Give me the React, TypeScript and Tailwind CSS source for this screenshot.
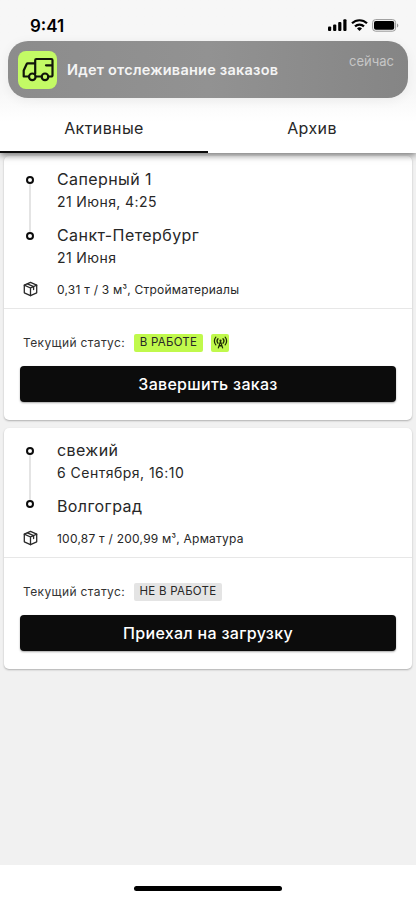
import React from "react";

function Dot() {
  return <span className="h-2 w-2 rounded-full border-2 border-[#0c0c0c] bg-white" />;
}

function Track({ className }: { className: string }) {
  return (
    <div className={"flex w-2 shrink-0 flex-col items-center " + className}>
      <Dot />
      <span className="w-[2px] grow bg-[#e4e4e4]" />
      <Dot />
    </div>
  );
}

function BoxIcon() {
  return (
    <svg width="15" height="16" viewBox="0 0 15 16" fill="none" stroke="#2a2a2a" strokeWidth="1.3" strokeLinejoin="round" strokeLinecap="round">
      <path d="M7.500 1.300 13.700 4.200v7.600L7.500 14.700 1.300 11.800V4.200Z" />
      <path d="M1.300 4.200 7.500 7l6.200-2.800M7.500 7v7.700M4.400 2.800l6.200 2.800v3" />
    </svg>
  );
}

function TowerIcon() {
  return (
    <svg width="15" height="13" viewBox="0 0 16 14" fill="none" stroke="#1d2b05" strokeWidth="1.350" strokeLinecap="round">
      <path d="M3 1.200C.9 3.400.9 7.300 3 9.500M13 1.200c2.100 2.200 2.100 6.100 0 8.300M5.300 3c-1.200 1.300-1.200 3.500 0 4.800M10.700 3c1.200 1.300 1.200 3.500 0 4.800M8 5.800 5.700 12.800M8 5.800l2.300 7M6.700 10.500h2.600" />
      <circle cx="8" cy="4.900" r="1.200" fill="#1d2b05" stroke="none" />
    </svg>
  );
}

function TruckIcon() {
  return (
    <svg width="32" height="26" viewBox="0 0 32 26" fill="none" stroke="#10150a" strokeWidth="2.200" strokeLinejoin="round" strokeLinecap="round">
      <path d="M7 19.500H1.700V13.500L4.700 7Q5 6.400 5.700 6.400H13.200M13.200 16.800V3.200A1.200 1.200 0 0 1 14.400 2h14.900a1.200 1.200 0 0 1 1.200 1.200v15.100a1.200 1.200 0 0 1-1.200 1.200H26.500M13.700 19.500h6M30.500 8.300h-6.500" />
      <circle cx="10.300" cy="19.800" r="3.300" />
      <circle cx="23" cy="19.800" r="3.300" />
    </svg>
  );
}

function StatusBar() {
  return (
    <div className="flex h-[41px] items-start justify-between pl-[30px] pr-[17px]">
      <div className="mt-[16px] text-[17px] leading-[20px] font-semibold text-black">9:41</div>
      <div className="mt-[18px] flex h-[14px] items-center">
        <svg width="19" height="12" viewBox="0 0 19 12">
          <rect x="0" y="7.500" width="3.200" height="4.500" rx="1" />
          <rect x="5.100" y="5.500" width="3.200" height="6.500" rx="1" />
          <rect x="10.200" y="3" width="3.200" height="9" rx="1" />
          <rect x="15.300" y="0.200" width="3.200" height="11.800" rx="1" />
        </svg>
        <svg className="ml-1" width="17" height="12" viewBox="0 0 17 12">
          <path fill="none" stroke="#000" strokeWidth="2.200" d="M1 4.300a10.800 10.800 0 0 1 15 0M4 7.400a6.500 6.500 0 0 1 9 0" />
          <path d="M8.500 12 6 9.500a3.600 3.600 0 0 1 5 0Z" />
        </svg>
        <svg className="ml-[4px]" width="27" height="13" viewBox="0 0 27 13">
          <rect x=".6" y=".6" width="23" height="11.600" rx="3" fill="none" stroke="#999" />
          <rect x="2" y="2" width="20.200" height="8.800" rx="1.800" />
          <path d="M25 4.500c1.800.6 1.800 3.400 0 4Z" fill="#999" />
        </svg>
      </div>
    </div>
  );
}

function Cargo({ volume, kind }: { volume: string; kind: string }) {
  return (
    <div className="flex h-5 items-center pl-[19px]">
      <BoxIcon />
      <span className="mt-px ml-[19px] text-[12px] leading-5 tracking-[0.230px] whitespace-nowrap">
        {volume}<span className="align-[1px] text-[10px] leading-none">³</span>, {kind}
      </span>
    </div>
  );
}

function ActionButton({ children }: { children: React.ReactNode }) {
  return (
    <button className="mt-[14px] block h-9 w-full rounded-[4px] bg-[#0c0c0c] text-[16px] leading-9 font-medium tracking-[0.3px] text-white shadow-[0_1px_2px_rgba(0,0,0,0.35)]">
      {children}
    </button>
  );
}

export default function App() {
  return (
    <div className="flex h-[900px] w-[416px] flex-col overflow-hidden bg-[#f1f1f1] text-[#272727] [font-family:Inter,'Liberation_Sans',sans-serif]">
      <header className="relative z-10 flex h-[153px] shrink-0 flex-col bg-linear-to-b from-[#f7f7f7] from-60% to-white to-80% shadow-[0_2px_7px_rgba(0,0,0,0.55)]">
        <StatusBar />
        <div className="mx-2 flex h-[57px] items-center rounded-[20px] bg-linear-to-r from-[#8c8c8c] via-[#929292] to-[#858585] pl-[10px] shadow-[0_2px_12px_rgba(0,0,0,0.06)]">
          <div className="flex h-[38px] w-[39px] items-center justify-center rounded-[8px] bg-[#c3fa65]">
            <TruckIcon />
          </div>
          <div className="ml-[10px] text-[14.500px] leading-5 font-semibold tracking-[0.230px] whitespace-nowrap text-[#f4f4f4]">Идет отслеживание заказов</div>
          <div className="mt-[5px] mr-[14px] ml-auto self-start text-[13px] leading-[30px] text-[#c6c6c6]">сейчас</div>
        </div>
        <nav className="flex grow text-[16px] tracking-[0.4px]">
          <div className="flex w-1/2 items-center justify-center border-b-2 border-[#0c0c0c] pt-[7px]">Активные</div>
          <div className="flex w-1/2 items-center justify-center border-b-2 border-white pt-[7px]">Архив</div>
        </nav>
      </header>

      <main className="flex grow flex-col px-1 pt-[3px]">
        <section className="h-[264px] rounded-[5px] bg-white shadow-[0_1px_2px_rgba(0,0,0,0.28)]">
          <div className="flex h-[123px] pt-[13px]">
            <Track className="mt-[7px] ml-[22px] h-[64px]" />
            <div className="ml-[23px]">
              <div className="h-5 text-[16px] leading-5 tracking-[0.4px]">Саперный 1</div>
              <div className="mt-[3px] h-5 text-[14px] leading-5 tracking-[0.4px]">21 Июня, 4:25</div>
              <div className="mt-[13px] h-5 text-[16px] leading-5 tracking-[0.430px]">Санкт-Петербург</div>
              <div className="mt-[3px] h-5 text-[14px] leading-5 tracking-[0.4px]">21 Июня</div>
            </div>
          </div>
          <Cargo volume="0,31 т / 3 м" kind="Стройматериалы" />
          <div className="mt-[9px] h-px bg-[#e7e7e7]" />
          <div className="px-4 pt-6">
            <div className="flex h-[19px] items-center pl-[3px] text-[12px]">
              <span className="w-[111px] tracking-[0.370px] whitespace-nowrap text-[#333]">Текущий статус:</span>
              <span className="flex h-[18px] w-[69px] items-center justify-center rounded-[2px] bg-[#c0f94c] pt-px text-[11.500px] tracking-[0.250px] whitespace-nowrap">В РАБОТЕ</span>
              <span className="ml-[8px] flex h-[18px] w-[18px] items-center justify-center rounded-[2px] bg-[#c0f94c]"><TowerIcon /></span>
            </div>
            <ActionButton>Завершить заказ</ActionButton>
          </div>
        </section>

        <section className="mt-2 h-[241px] rounded-[5px] bg-white shadow-[0_1px_2px_rgba(0,0,0,0.28)]">
          <div className="flex h-[100px] pt-[12px]">
            <Track className="mt-[7px] ml-[22px] h-[61px]" />
            <div className="ml-[23px]">
              <div className="h-5 text-[16px] leading-5 tracking-[0.4px]">свежий</div>
              <div className="mt-[3px] h-5 text-[14px] leading-5 tracking-[0.480px]">6 Сентября, 16:10</div>
              <div className="mt-[13px] h-5 text-[16px] leading-5 tracking-[0.4px]">Волгоград</div>
            </div>
          </div>
          <Cargo volume="100,87 т / 200,99 м" kind="Арматура" />
          <div className="mt-[9px] h-px bg-[#e7e7e7]" />
          <div className="px-4 pt-6">
            <div className="flex h-[19px] items-center pl-[3px] text-[12px]">
              <span className="w-[111px] tracking-[0.370px] whitespace-nowrap text-[#333]">Текущий статус:</span>
              <span className="flex h-[18px] w-[88px] items-center justify-center rounded-[2px] bg-[#e4e4e4] pt-px text-[11.500px] tracking-[0.250px] whitespace-nowrap">НЕ В РАБОТЕ</span>
            </div>
            <ActionButton>Приехал на загрузку</ActionButton>
          </div>
        </section>
      </main>

      <footer className="flex h-[35px] shrink-0 justify-center bg-white pt-[21px]">
        <div className="h-[5px] w-[148px] rounded-full bg-black" />
      </footer>
    </div>
  );
}
